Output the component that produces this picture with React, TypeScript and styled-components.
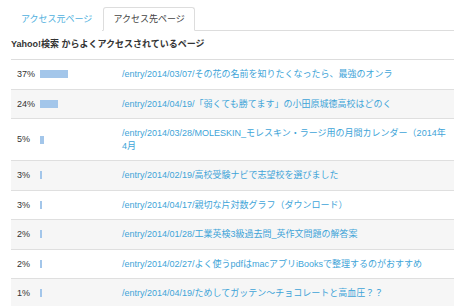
import * as React from "react";
import styled, { createGlobalStyle } from "styled-components";

interface Entry {
  percent: number;
  path: string;
}

const entries: Entry[] = [
  { percent: 37, path: "/entry/2014/03/07/その花の名前を知りたくなったら、最強のオンラ" },
  { percent: 24, path: "/entry/2014/04/19/「弱くても勝てます」の小田原城徳高校はどのく" },
  { percent: 5, path: "/entry/2014/03/28/MOLESKIN_モレスキン・ラージ用の月間カレンダー（2014年4月" },
  { percent: 3, path: "/entry/2014/02/19/高校受験ナビで志望校を選びました" },
  { percent: 3, path: "/entry/2014/04/17/親切な片対数グラフ（ダウンロード）" },
  { percent: 2, path: "/entry/2014/01/28/工業英検3級過去問_英作文問題の解答案" },
  { percent: 2, path: "/entry/2014/02/27/よく使うpdfはmacアプリiBooksで整理するのがおすすめ" },
  { percent: 1, path: "/entry/2014/04/19/ためしてガッテン〜チョコレートと高血圧？？" },
];

const App: React.FC = () => {
  return (
    <>
      <GlobalStyle />
      <Page>
        <TabBar>
          <Tab>アクセス元ページ</Tab>
          <Tab active>アクセス先ページ</Tab>
        </TabBar>
        <Heading>Yahoo!検索 からよくアクセスされているページ</Heading>
        <List>
          {entries.map((entry, index) => (
            <Row key={index} striped={index % 2 === 1}>
              <Stat>
                <Percent>{entry.percent}%</Percent>
                <Bar style={{ width: `${Math.max(entry.percent * 0.75, 1.5)}px` }} />
              </Stat>
              <Link href="#">{entry.path}</Link>
            </Row>
          ))}
        </List>
      </Page>
    </>
  );
};

const GlobalStyle = createGlobalStyle`
  body {
    margin: 0;
    background: #ffffff;
    font-family: "Liberation Sans", "Noto Sans CJK JP", sans-serif;
    font-size: 9px;
    color: #333333;
    overflow: hidden;
  }
`;

const Page = styled.div`
  padding-left: 11px;
`;

const TabBar = styled.div`
  display: flex;
  padding-top: 7px;
  border-bottom: 1px solid #dddddd;
`;

const Tab = styled.div<{ active?: boolean }>`
  height: 22px;
  line-height: 22px;
  padding: 0 9px;
  margin-right: 1px;
  margin-bottom: -1px;
  border: 1px solid ${(props) => (props.active ? "#dddddd" : "transparent")};
  border-bottom-color: ${(props) => (props.active ? "#ffffff" : "transparent")};
  border-radius: 3px 3px 0 0;
  background: #ffffff;
  color: ${(props) => (props.active ? "#444444" : "#4fb0de")};
  white-space: nowrap;
`;

const Heading = styled.div`
  padding: 7px 0 9px;
  line-height: 12px;
  font-weight: bold;
  color: #333333;
  border-bottom: 1px solid #dddddd;
`;

const List = styled.div`
  display: flex;
  flex-direction: column;
`;

const Row = styled.div<{ striped: boolean }>`
  display: grid;
  grid-template-columns: 111px 1fr;
  align-items: center;
  padding: 8px 4px 8px 0;
  line-height: 12.5px;
  background: ${(props) => (props.striped ? "#f6f6f6" : "#ffffff")};
  border-bottom: 1px solid #dfdfdf;
`;

const Stat = styled.div`
  display: flex;
  align-items: center;
  padding-left: 6px;
`;

const Percent = styled.span`
  width: 23px;
  color: #333333;
`;

const Bar = styled.span`
  display: block;
  height: 8px;
  background: #a3c6ea;
`;

const Link = styled.a`
  color: #3ea4d8;
  text-decoration: none;
`;

export default App;
